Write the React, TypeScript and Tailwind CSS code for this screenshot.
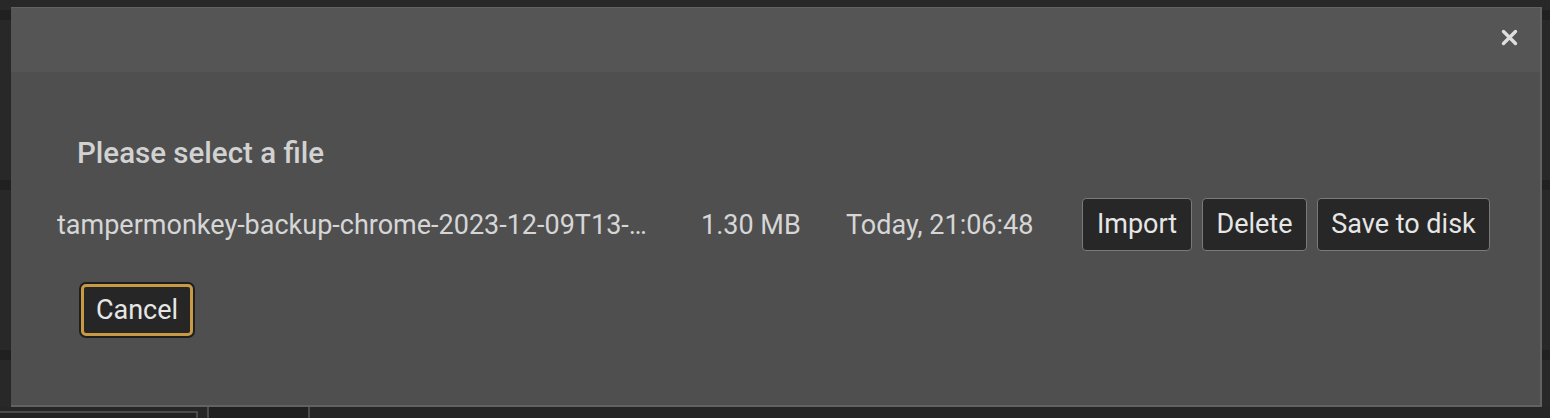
import type { ReactNode } from 'react';

/**
 * Tampermonkey "restore backup" dialog drawn over the (dimmed) options page.
 * Background rows are only hinted at; the modal is the content.
 */

const FONT = "font-['Roboto','Liberation_Sans',sans-serif]";

function DarkButton({ children, className = '' }: { children: ReactNode; className?: string }) {
  return (
    <button
      type="button"
      className={`h-[53px] whitespace-nowrap rounded-[4px] border border-[#7a7a7a] bg-[#272727] text-[27px] leading-none text-[#e6e6e6] ${className}`}
    >
      {children}
    </button>
  );
}

function CloseIcon() {
  return (
    <svg width="17" height="17" viewBox="0 0 17 17" aria-hidden="true">
      <path d="M2.5 2.5L14.5 14.5M14.5 2.5L2.5 14.5" stroke="#dedede" strokeWidth="3.4" strokeLinecap="round" />
    </svg>
  );
}

export default function App() {
  return (
    <div className={`relative h-[418px] w-[1550px] overflow-hidden bg-[#282828] ${FONT}`}>
      {/* page behind the overlay */}
      <div className="flex flex-col">
        <div className="h-[10px]" />
        <div className="h-[10px] bg-[#202020]" />
        <div className="h-[160px]" />
        <div className="h-[10px] bg-[#202020]" />
        <div className="h-[160px]" />
        <div className="h-[10px] bg-[#202020]" />
        <div className="h-[47px]" />
        <div className="flex h-[11px] bg-[#262626]">
          <div className="mt-[4px] w-[198px] border-t-2 border-r-2 border-[#4c4c4c] bg-[#222222]" />
          <div className="ml-[9px] w-[103px] border-x-2 border-[#4c4c4c] bg-[#202020]" />
        </div>
      </div>

      {/* modal */}
      <div className="absolute left-[11px] top-[7px] flex h-[400px] w-[1531px] flex-col border-t border-r-2 border-b-2 border-[#626262] bg-[#4f4f4f]">
        <div className="flex h-[64px] justify-end bg-[#555555] pt-[21px] pr-[22px]">
          <CloseIcon />
        </div>

        <div className="flex flex-col pt-[64px]">
          <h2 className="pl-[66px] text-[29.5px] leading-[34px] font-medium text-[#d2d2d2]">
            Please select a file
          </h2>

          <div className="mt-[28px] flex items-center pl-[46px] text-[27px] text-[#d6d6d6]">
            <div className="w-[644px] pt-px">
              <div className="max-w-[600px] truncate">
                tampermonkey-backup-chrome-2023-12-09T13-35-22.txt
              </div>
            </div>
            <div className="w-[145px] pt-px">1.30 MB</div>
            <div className="w-[236px] pt-px">Today, 21:06:48</div>
            <div className="flex gap-[10px]">
              <DarkButton className="w-[110px]">Import</DarkButton>
              <DarkButton className="w-[105px]">Delete</DarkButton>
              <DarkButton className="w-[173px]">Save to disk</DarkButton>
            </div>
          </div>

          <div className="mt-[33px] pl-[70px]">
            <button
              type="button"
              className="h-[52px] w-[112px] rounded-[5px] border-[3px] border-[#c99a45] bg-[#262626] text-[27px] leading-none text-[#e6e6e6] ring-2 ring-[#1e1e1e]"
            >
              Cancel
            </button>
          </div>
        </div>
      </div>
    </div>
  );
}
